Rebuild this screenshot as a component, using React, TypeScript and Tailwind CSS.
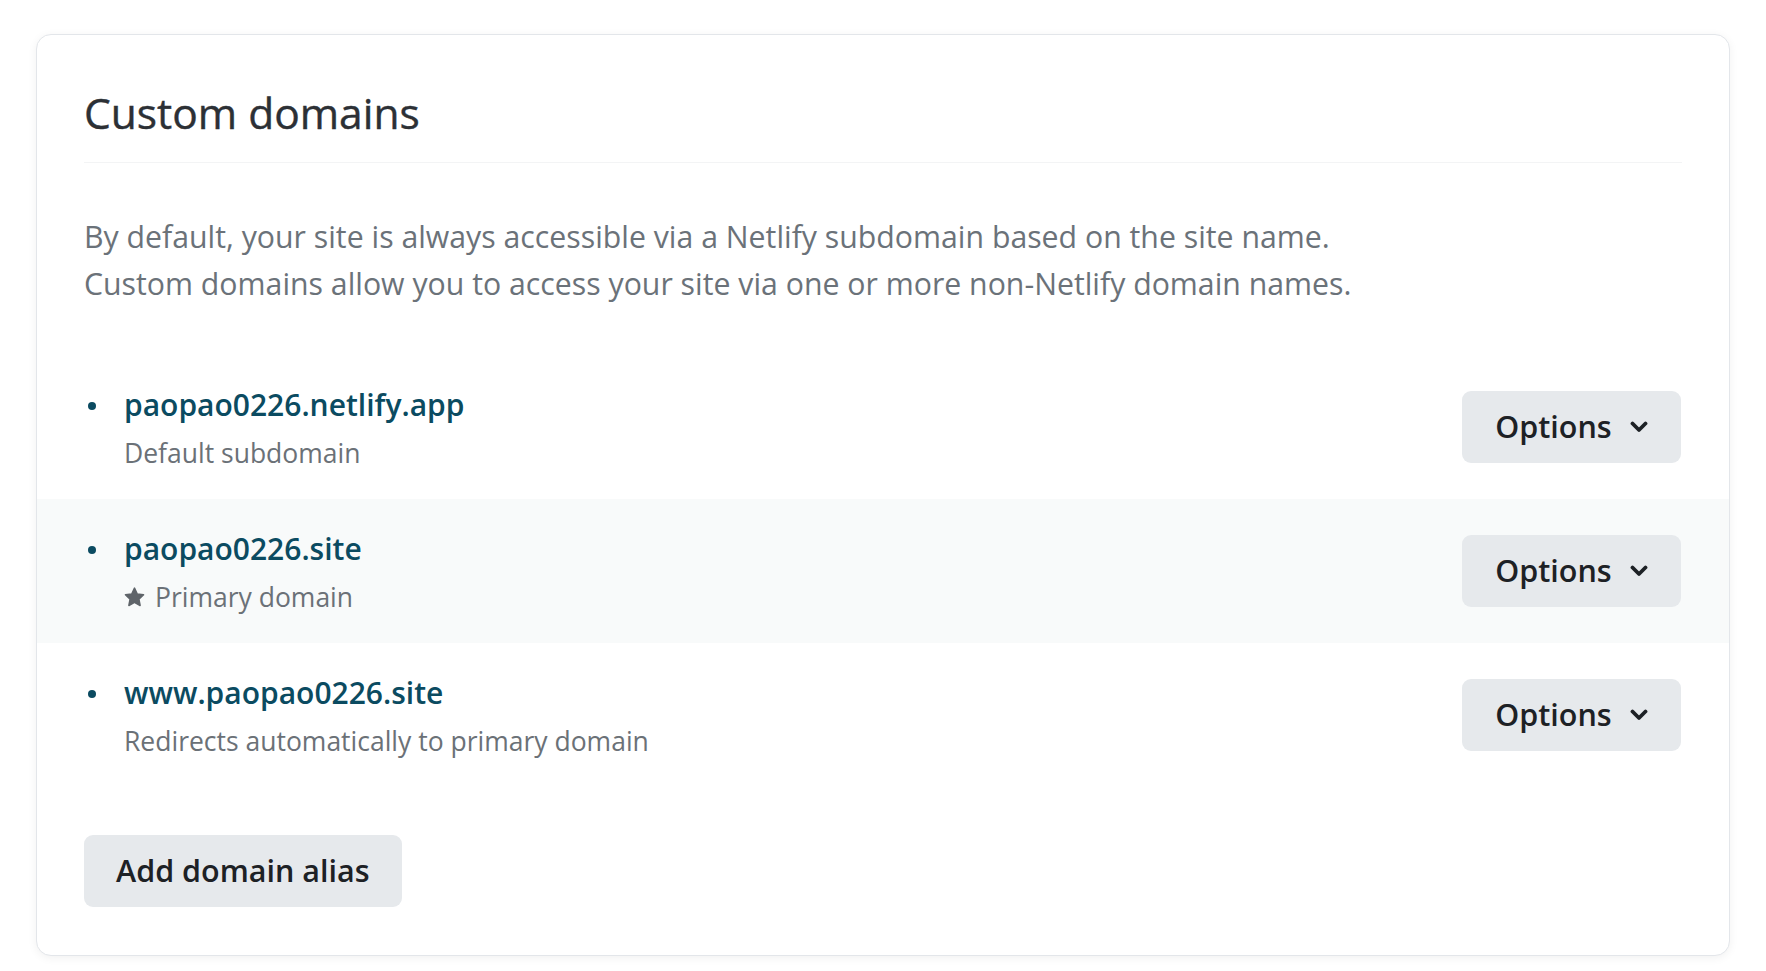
import React from 'react';

type Domain = {
  name: string;
  note: string;
  primary?: boolean;
  striped?: boolean;
};

const domains: Domain[] = [
  { name: 'paopao0226.netlify.app', note: 'Default subdomain' },
  { name: 'paopao0226.site', note: 'Primary domain', primary: true, striped: true },
  { name: 'www.paopao0226.site', note: 'Redirects automatically to primary domain' },
];

const Chevron = () => (
  <svg width="18" height="12" viewBox="0 0 18 12" className="ml-[18px]">
    <path d="M2.5 2.5 L9 9 L15.5 2.5" fill="none" stroke="#1d2125" strokeWidth="3.8" strokeLinecap="round" strokeLinejoin="round" />
  </svg>
);

const Star = () => (
  <svg width="21" height="20" viewBox="1 1 22 21" className="mr-[10px] shrink-0">
    <path
      d="M12 2.2l2.9 6.1 6.6.9-4.9 4.6 1.3 6.6L12 17.2l-5.9 3.2 1.3-6.6-4.9-4.6 6.6-.9z"
      fill="#5f6469"
      stroke="#5f6469"
      strokeWidth="1.6"
      strokeLinejoin="round"
    />
  </svg>
);

const DomainRow: React.FC<{ d: Domain }> = ({ d }) => (
  <li className={`flex items-center justify-between h-[144px] px-[48px] ${d.striped ? 'bg-[#f8fafa]' : ''}`}>
    <div className="flex items-start mt-[3px]">
      <span className="w-[8px] h-[8px] rounded-full bg-[#0b4b61] mt-[21px] ml-[3px] mr-[28px] shrink-0"></span>
      <div className="flex flex-col">
        <a href="#" className="text-[30px] leading-[48px] font-semibold text-[#0b4b61]">{d.name}</a>
        <span className="flex items-center text-[26.5px] leading-[48px] text-[#6b7177]">
          {d.primary && <Star />}
          {d.note}
        </span>
      </div>
    </div>
    <button className="flex items-center h-[72px] w-[219px] justify-center rounded-[9px] bg-[#e6e9ec] text-[30.5px] font-semibold text-[#1d2125]">
      Options
      <Chevron />
    </button>
  </li>
);

export default function App() {
  return (
    <div className="min-h-screen bg-white pt-[34px] px-[36px] pb-[15px]" style={{ fontFamily: '"Open Sans", "Noto Sans", sans-serif' }}>
      <section className="h-[922px] rounded-[15px] border border-[#e3e6ea] bg-white shadow-[0_2px_10px_rgba(0,0,0,0.06)] py-[51px]">
        <div className="px-[47px]">
          <h2 className="text-[42.5px] leading-[54px] font-normal text-[#2c3035] pb-[22px] border-b border-[#f3f4f5] [-webkit-text-stroke:0.4px_#2c3035]">
            Custom domains
          </h2>
          <p className="mt-[50px] text-[30.25px] leading-[47px] text-[#6b7279]">
            By default, your site is always accessible via a Netlify subdomain based on the site name.
            <br />
            Custom domains allow you to access your site via one or more non-Netlify domain names.
          </p>
        </div>
        <ul className="mt-[48px]">
          {domains.map((d) => (
            <DomainRow key={d.name} d={d} />
          ))}
        </ul>
        <div className="px-[47px] mt-[48px]">
          <button className="h-[72px] px-[32px] rounded-[9px] bg-[#e6e9ec] text-[30.5px] font-semibold text-[#1d2125]">
            Add domain alias
          </button>
        </div>
      </section>
    </div>
  );
}
